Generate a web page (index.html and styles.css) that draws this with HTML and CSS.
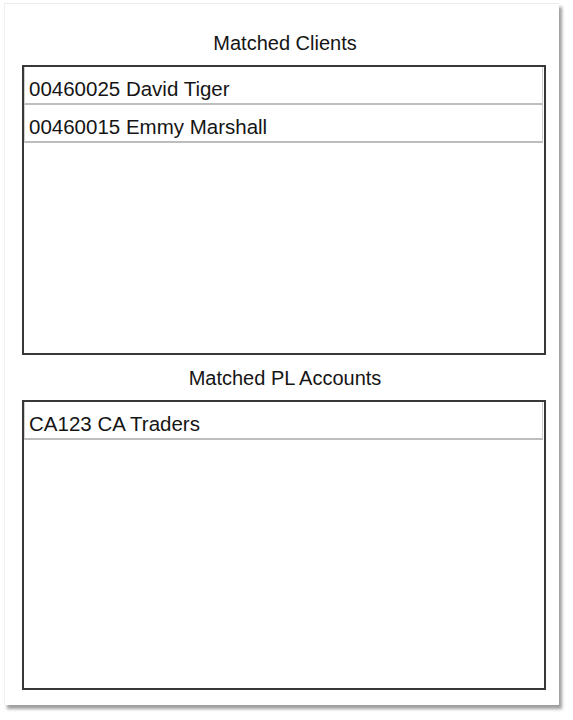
FILE: index.html
```html
<!DOCTYPE html>
<html>
<head>
<meta charset="utf-8">
<link rel="stylesheet" href="styles.css">
</head>
<body>
<div class="panel">
  <div class="caption">Matched Clients</div>
  <div class="listbox">
    <div class="item">00460025 David Tiger</div>
    <div class="item">00460015 Emmy Marshall</div>
  </div>
  <div class="caption second">Matched PL Accounts</div>
  <div class="listbox">
    <div class="item">CA123 CA Traders</div>
  </div>
</div>
</body>
</html>
```
FILE: styles.css
```css
html, body {
  margin: 0;
  padding: 0;
  background: #ffffff;
}
body {
  width: 573px;
  height: 720px;
  font-family: "Liberation Sans", Arial, sans-serif;
  color: #151515;
}
.panel {
  box-sizing: border-box;
  margin: 3px 0 0 4px;
  width: 555px;
  height: 702px;
  background: #ffffff;
  border-top: 1px solid #ececec;
  border-left: 1px solid #efefef;
  box-shadow: 3px 4px 3px rgba(0, 0, 0, 0.38);
  padding: 27px 13px 0 17px;
}
.caption {
  height: 24px;
  line-height: 24px;
  font-size: 20px;
  text-align: center;
  margin-bottom: 10px;
  padding-left: 2px;
}
.caption.second {
  margin-top: 11px;
}
.listbox {
  box-sizing: border-box;
  height: 290px;
  border: 2px solid #383838;
  padding: 0 1px 0 0;
  background: #ffffff;
}
.item {
  box-sizing: border-box;
  height: 38px;
  padding: 8px 0 0 4px;
  line-height: 28px;
  font-size: 20.5px;
  border-left: 1px solid #cfcfcf;
  border-right: 1px solid #cfcfcf;
  border-bottom: 2px solid #bdbdbd;
  white-space: nowrap;
}
```
